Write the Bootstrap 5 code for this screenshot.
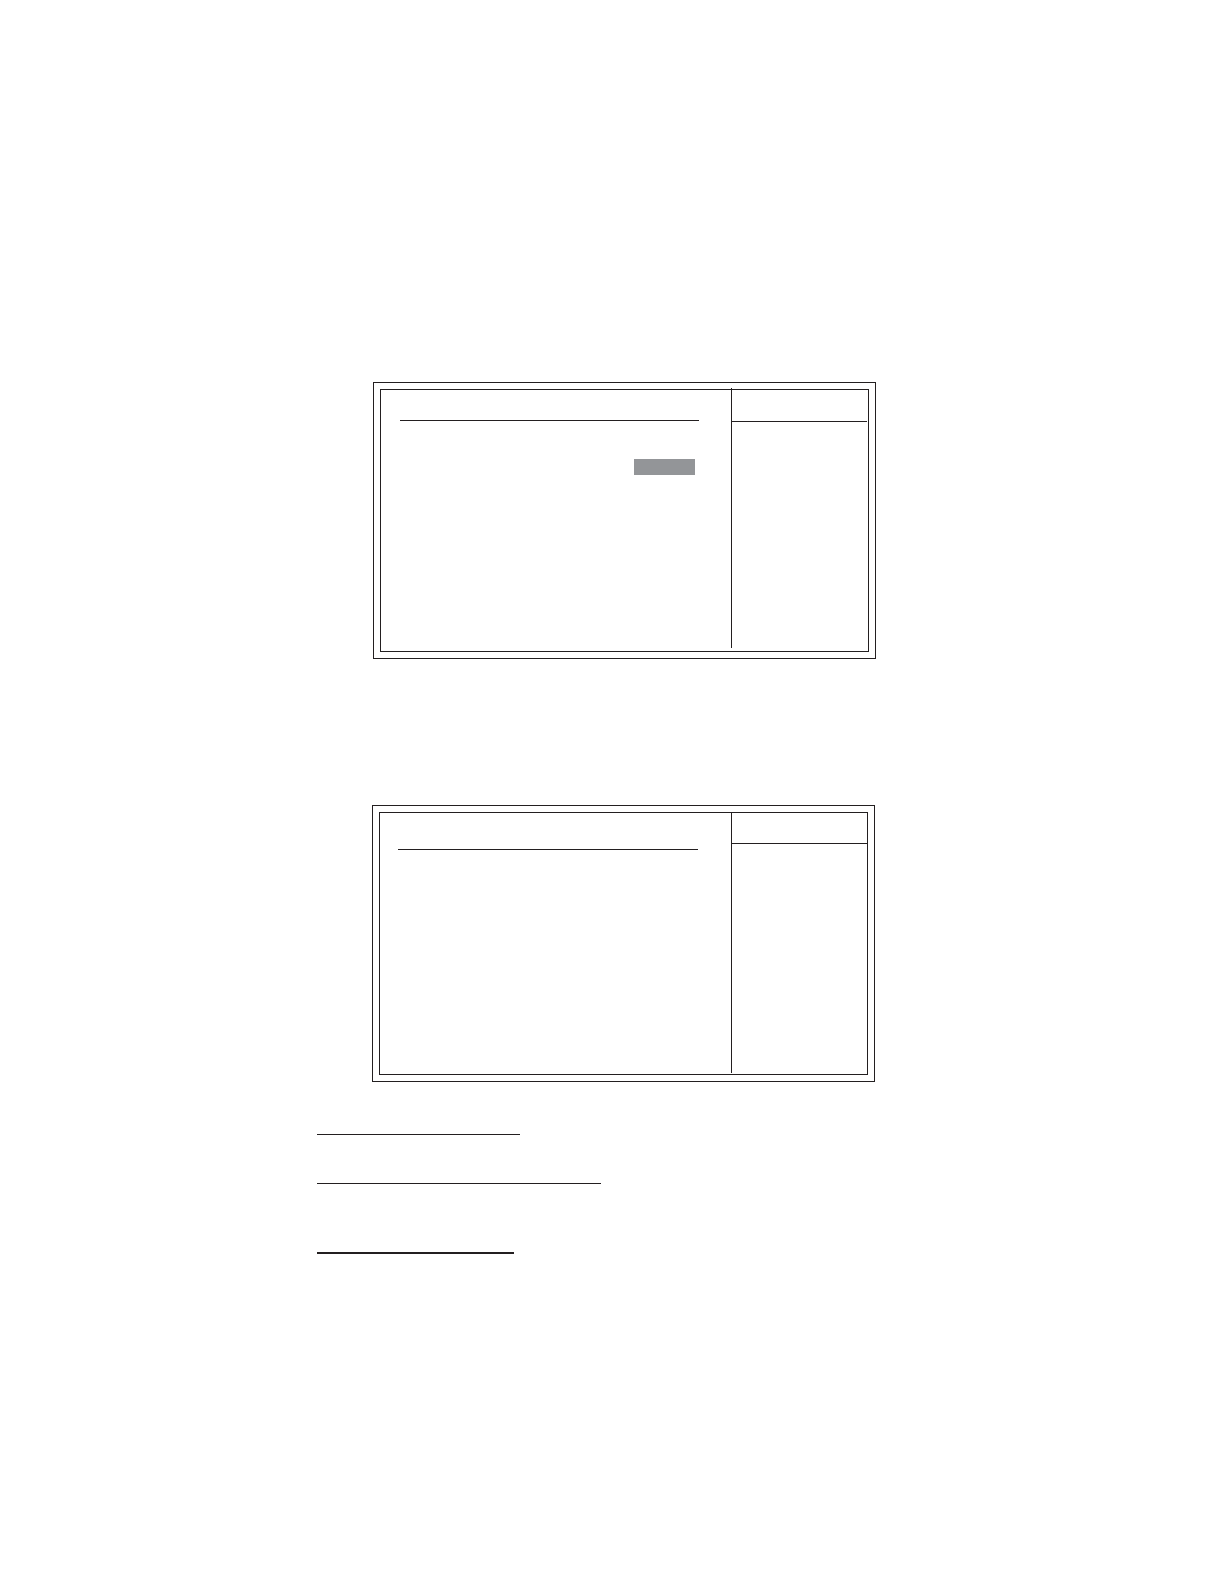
<!DOCTYPE html>
<html lang="en">
<head>
<meta charset="utf-8">
<meta name="viewport" content="width=device-width, initial-scale=1">
<title>Setup screens</title>
<link href="https://cdn.jsdelivr.net/npm/bootstrap@5.3.0/dist/css/bootstrap.min.css" rel="stylesheet">
<style>
  :root { --ink: #231f20; --shade: #939598; }
  body { background: #fff; color: var(--ink); font-family: "Liberation Sans", sans-serif; }
  .sheet { max-width: 590px; padding-top: 382px; }
  .screen { max-width: 503px; padding: 6px; border: 1px solid var(--ink); }
  .screen-first { margin-left: 56px; }
  .screen-second { margin-left: 55px; margin-top: 146px; }
  .screen-body { min-height: 263px; border: 1px solid var(--ink); }
  .title-area { height: 31px; border-bottom: 1px solid var(--ink); margin: 0 32px 0 19px; }
  .screen-second .title-area { height: 37px; margin: 0 33px 0 18px; }
  .help-pane { width: 137px; border-left: 1px solid var(--ink); }
  .screen-first .help-pane { margin: -2px 0 3px; }
  .screen-second .help-pane { width: 136px; margin-bottom: 1px; }
  .help-title { height: 31px; border-bottom: 1px solid var(--ink); }
  .screen-first .help-title { height: 34px; margin-right: 1px; }
  .selected-value { width: 61px; height: 16px; background: var(--shade); margin: 38px 36px 0 auto; }
  .section-rule { height: 1px; background: var(--ink); }
  .rule-one { max-width: 203px; margin-top: 52px; }
  .rule-two { max-width: 284px; margin-top: 48px; }
  .rule-three { max-width: 197px; height: 2px; margin-top: 68px; }
</style>
</head>
<body>
<main class="sheet mx-auto">
  <section class="screen screen-first">
    <div class="screen-body d-flex">
      <div class="flex-grow-1">
        <div class="title-area"></div>
        <div class="selected-value"></div>
      </div>
      <aside class="help-pane flex-shrink-0">
        <div class="help-title"></div>
      </aside>
    </div>
  </section>
  <section class="screen screen-second">
    <div class="screen-body d-flex">
      <div class="flex-grow-1">
        <div class="title-area"></div>
      </div>
      <aside class="help-pane flex-shrink-0">
        <div class="help-title"></div>
      </aside>
    </div>
  </section>
  <div class="section-rule rule-one"></div>
  <div class="section-rule rule-two"></div>
  <div class="section-rule rule-three"></div>
</main>
<script src="https://cdn.jsdelivr.net/npm/bootstrap@5.3.0/dist/js/bootstrap.bundle.min.js"></script>
</body>
</html>
